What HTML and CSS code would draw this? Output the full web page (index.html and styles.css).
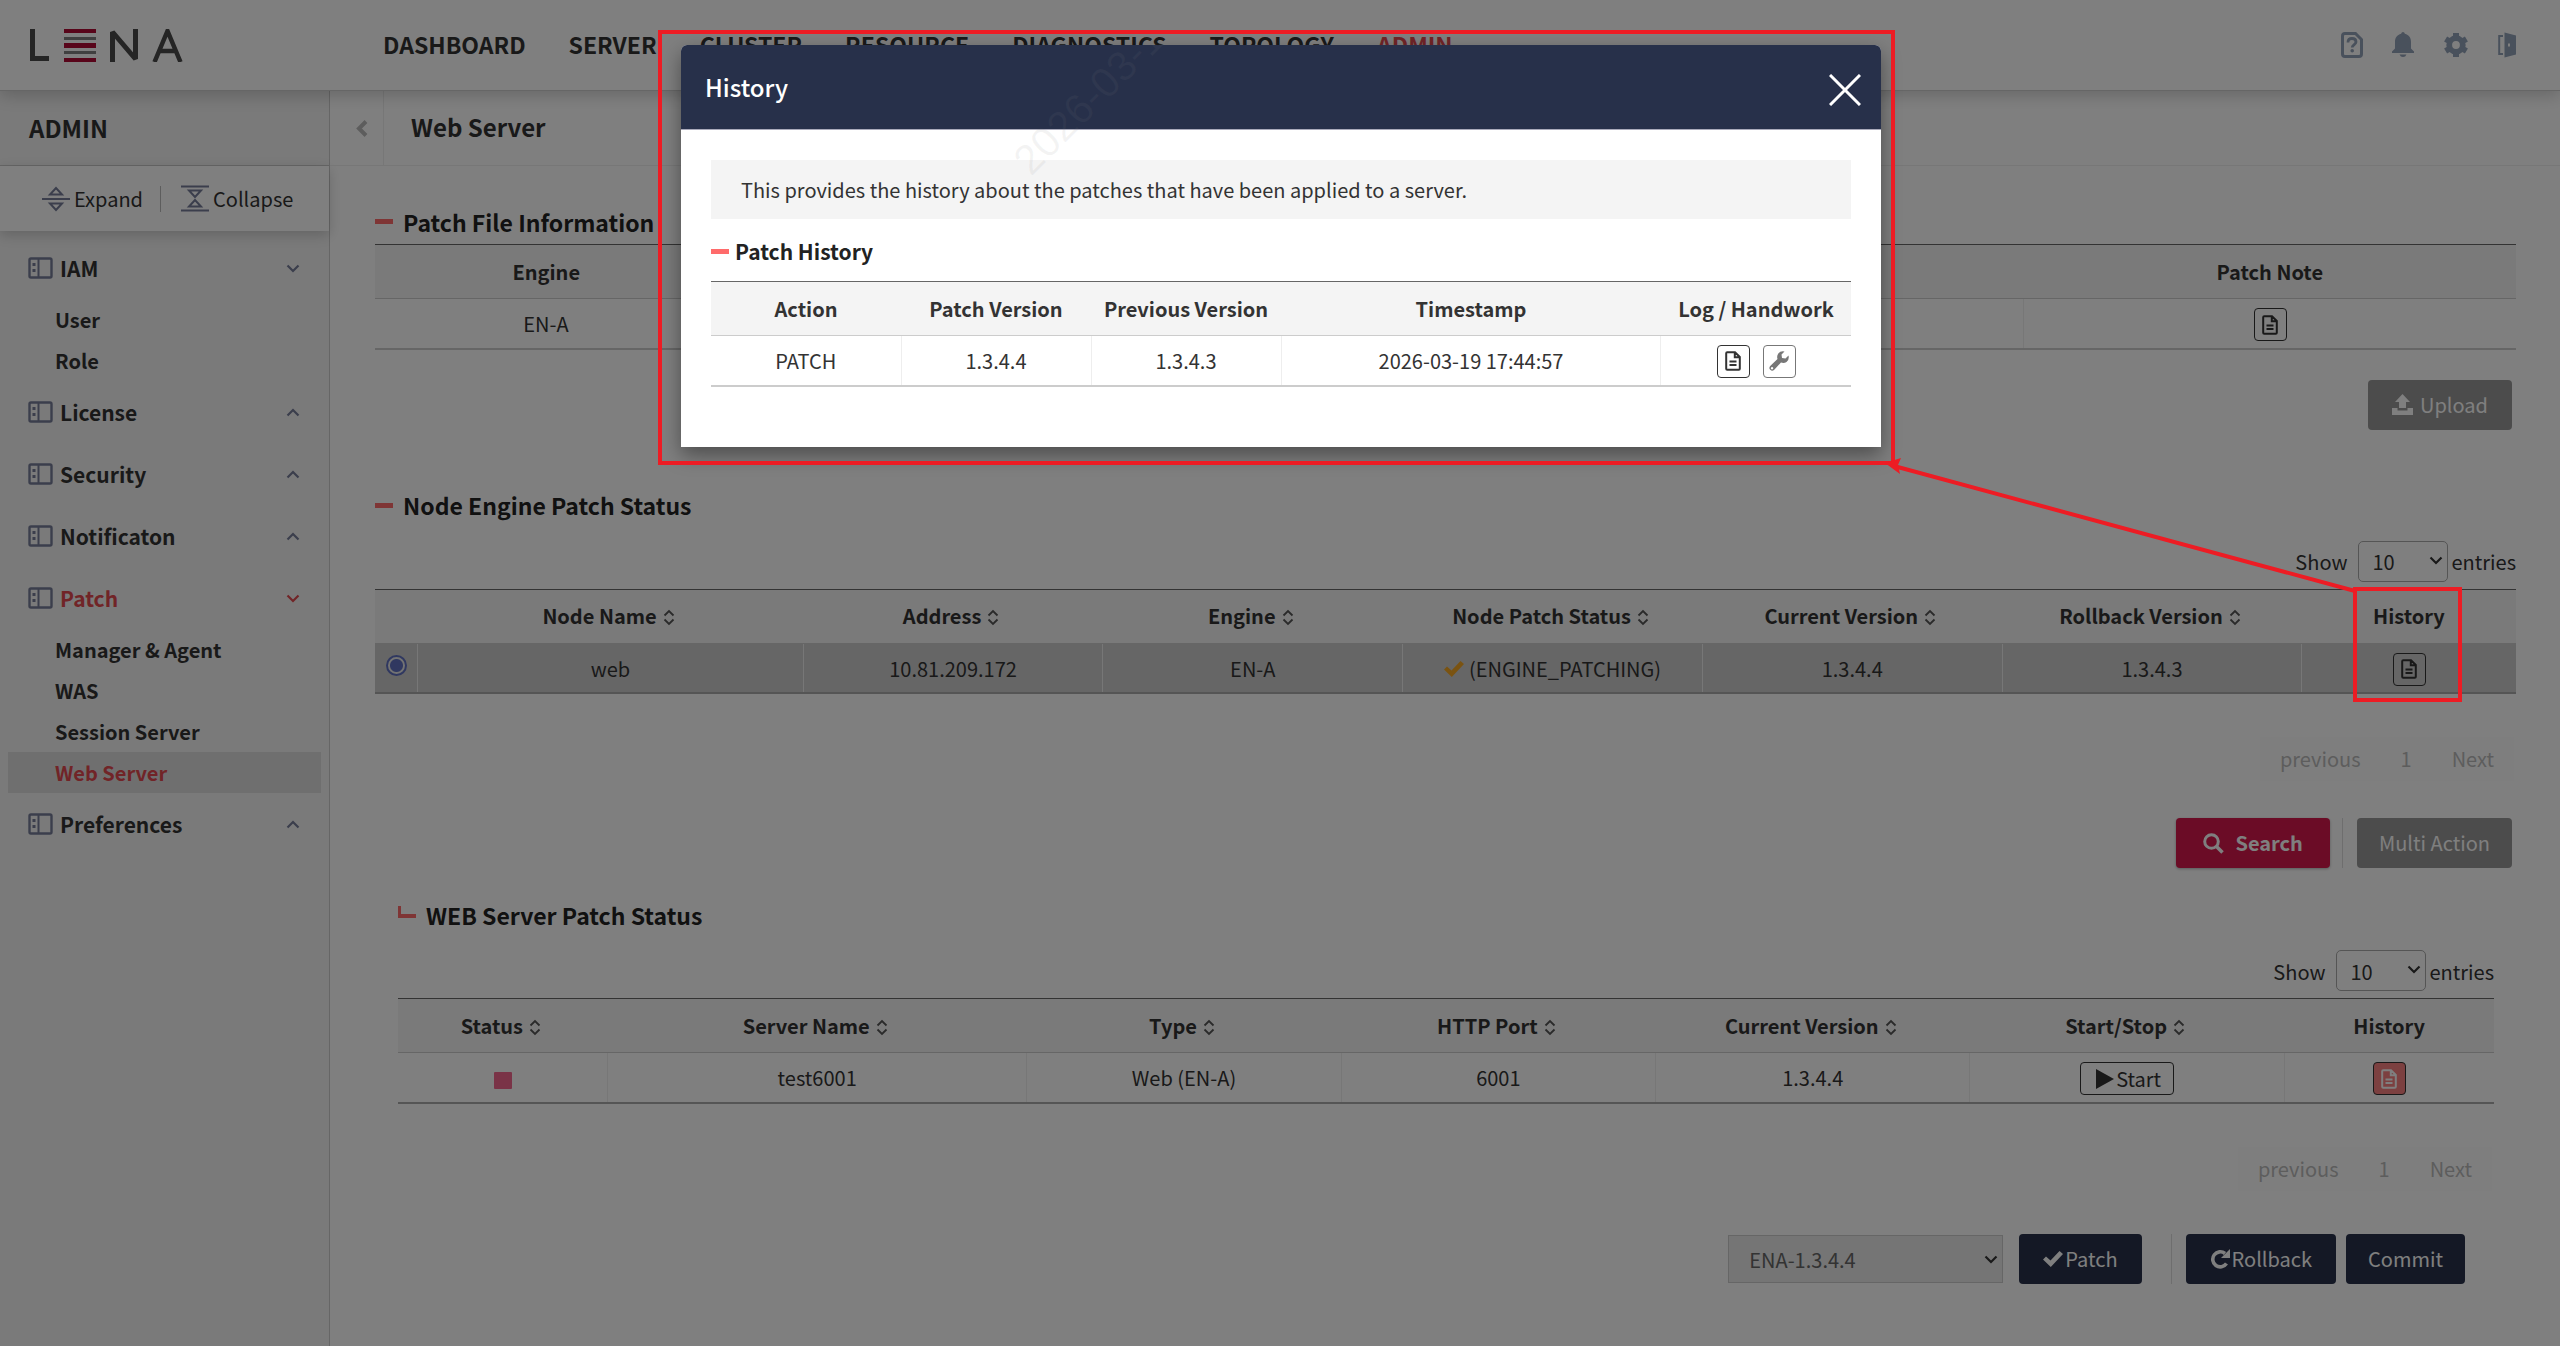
FILE: index.html
```html
<!DOCTYPE html>
<html lang="en">
<head>
<meta charset="utf-8">
<title>LENA - Web Server Patch</title>
<link rel="stylesheet" href="styles.css">
</head>
<body>
<svg class="sprite" aria-hidden="true">
  <symbol id="i-menu" viewBox="0 0 25 22"><rect x="1.500" y="1.500" width="22" height="19" rx="1.500" fill="none" stroke="currentColor" stroke-width="2.400"/><path d="M10.500 1v20" stroke="currentColor" stroke-width="2"/><path d="M4.500 6h3v3h-3zM4.500 12h3v3h-3z" fill="currentColor"/></symbol>
  <symbol id="i-down" viewBox="0 0 14 9"><path d="M1.500 1.500 7 7l5.500-5.500" fill="none" stroke="currentColor" stroke-width="2.200"/></symbol>
  <symbol id="i-up" viewBox="0 0 14 9"><path d="M1.500 7.500 7 2l5.500 5.500" fill="none" stroke="currentColor" stroke-width="2.200"/></symbol>
  <symbol id="i-sort" viewBox="0 0 12 17"><path d="M1.500 6.500 6 2l4.500 4.500M1.500 10.500 6 15l4.500-4.500" fill="none" stroke="currentColor" stroke-width="1.800"/></symbol>
  <symbol id="i-doc" viewBox="0 0 16 20"><path d="M1.200 2.200q0-1 1-1H10l4.800 4.800v11.800q0 1-1 1H2.200q-1 0-1-1zM9.800 1.200v5h5M4.500 10.500h7M4.500 14h7" fill="none" stroke="currentColor" stroke-width="2"/></symbol>
  <symbol id="i-check" viewBox="0 0 20 16"><path d="M0 8.500 3 5.500 7.500 9.500 16.500 0 20 3 7.800 16z" fill="currentColor"/></symbol>
</svg>

<header class="topbar">
  <a class="logo" href="#" aria-label="LENA">
    <svg width="154" height="33" viewBox="0 0 154 33"><g fill="none" stroke="#4a4a4a" stroke-width="5"><path d="M3.500 0v29.500H20"/><path d="M83.500 33V3L106.500 30V0" stroke-linejoin="bevel"/><path d="M125.500 33 138.500 2 151.500 33M129.500 22h18" stroke-width="4.500"/></g><path d="M35 0h32v4H35zM35 14h32v5H35zM35 29h32v4H35z" fill="#b00a34"/><path d="M35 8h32v3H35zM35 22h32v3H35z" fill="#808080"/></svg>
  </a>
  <nav class="mainnav">
    <a href="#">DASHBOARD</a><a href="#">SERVER</a><a href="#">CLUSTER</a><a href="#">RESOURCE</a><a href="#">DIAGNOSTICS</a><a href="#">TOPOLOGY</a><a href="#" class="active">ADMIN</a>
  </nav>
  <div class="tools">
    <button type="button" aria-label="Help"><svg width="22" height="26" viewBox="0 0 22 26"><path d="M4 1.500h10.500l6 6V22q0 2.500-2.500 2.500H4q-2.500 0-2.500-2.500V4Q1.500 1.500 4 1.500z" fill="none" stroke="currentColor" stroke-width="3"/><path d="M7 10.500q0-4 4-4t4 3.500c0 2.500-3.800 2.600-3.800 5.500" fill="none" stroke="currentColor" stroke-width="2.800"/><circle cx="11.200" cy="18.800" r="1.800" fill="currentColor"/></svg></button>
    <button type="button" aria-label="Notifications"><svg width="22" height="26" viewBox="0 0 22 26"><path d="M11 0q1.500 0 1.900 1.800C17 2.800 19 6 19 10v6.500l3 3V21H0v-1.500l3-3V10c0-4 2-7.200 6.100-8.200Q9.500 0 11 0zM7.500 22.500h7Q13.500 25 11 25t-3.500-2.500z" fill="currentColor"/></svg></button>
    <button type="button" aria-label="Settings"><svg width="26" height="26" viewBox="0 0 26 26"><circle cx="13" cy="13" r="6.800" fill="none" stroke="currentColor" stroke-width="5.800"/><path d="M13 1v5M13 20v5M2.600 7l4.300 2.500M19.100 16.500l4.300 2.500M2.600 19l4.300-2.500M19.100 9.500 23.400 7" stroke="currentColor" stroke-width="6"/></svg></button>
    <button type="button" aria-label="Log out"><svg width="18" height="26" viewBox="0 0 18 26"><path d="M5 4H1.200v18H5" fill="none" stroke="currentColor" stroke-width="2"/><path d="M6.500 0.500 18 3.500v19L6.500 25.500zM10 11.500v3h2v-3z" fill="currentColor" fill-rule="evenodd"/></svg></button>
  </div>
</header>

<div class="layout">
  <aside class="sidebar">
    <h2 class="side-title">ADMIN</h2>
    <div class="side-tools">
      <button type="button"><svg width="28" height="26" viewBox="0 0 28 26"><path d="M0 13h28M8 8.500h12L14 2zM8 17.500h12L14 24z" fill="none" stroke="currentColor" stroke-width="2"/></svg>Expand</button>
      <span class="side-sep"></span>
      <button type="button"><svg width="28" height="27" viewBox="0 0 28 27"><path d="M0 1.500h28M0 25.500h28M8 5.500h12L14 12zM8 21.500h12L14 15z" fill="none" stroke="currentColor" stroke-width="2"/></svg>Collapse</button>
    </div>
    <nav class="menu">
      <a class="group" href="#"><svg class="mi"><use href="#i-menu"/></svg>IAM<svg class="chev"><use href="#i-down"/></svg></a>
      <a class="item" href="#">User</a>
      <a class="item" href="#">Role</a>
      <a class="group" href="#"><svg class="mi"><use href="#i-menu"/></svg>License<svg class="chev"><use href="#i-up"/></svg></a>
      <a class="group" href="#"><svg class="mi"><use href="#i-menu"/></svg>Security<svg class="chev"><use href="#i-up"/></svg></a>
      <a class="group" href="#"><svg class="mi"><use href="#i-menu"/></svg>Notificaton<svg class="chev"><use href="#i-up"/></svg></a>
      <a class="group open" href="#"><svg class="mi"><use href="#i-menu"/></svg>Patch<svg class="chev"><use href="#i-down"/></svg></a>
      <a class="item" href="#">Manager &amp; Agent</a>
      <a class="item" href="#">WAS</a>
      <a class="item" href="#">Session Server</a>
      <a class="item current" href="#">Web Server</a>
      <a class="group" href="#"><svg class="mi"><use href="#i-menu"/></svg>Preferences<svg class="chev"><use href="#i-up"/></svg></a>
    </nav>
  </aside>

  <main class="content">
    <div class="crumb">
      <button type="button" class="back" aria-label="Hide menu"><svg width="12" height="17" viewBox="0 0 12 17"><path d="M10 1.500 3 8.500l7 7" fill="none" stroke="currentColor" stroke-width="4"/></svg></button>
      <h1>Web Server</h1>
    </div>

    <section class="block first">
      <h3 class="title">Patch File Information</h3>
      <table class="grid">
        <colgroup><col class="w16"><col><col class="w23"></colgroup>
        <thead><tr><th>Engine</th><th></th><th>Patch Note</th></tr></thead>
        <tbody><tr><td>EN-A</td><td></td><td><button type="button" class="icon-btn" aria-label="Patch note"><svg><use href="#i-doc"/></svg></button></td></tr></tbody>
      </table>
      <div class="actions upload-row">
        <button type="button" class="btn grey"><svg width="21" height="21" viewBox="0 0 21 21"><path d="M10.500 0 18 8h-4v6H7V8H3zM0 14h5.500v2.500h10V14H21v7H0z" fill="currentColor"/></svg>Upload</button>
      </div>
    </section>

    <section class="block nodes">
      <h3 class="title">Node Engine Patch Status</h3>
      <label class="length">Show <span class="select"><select><option>10</option></select><svg><use href="#i-down"/></svg></span> entries</label>
      <table class="grid strong">
        <colgroup><col class="w2"><col class="w18"><col class="w14"><col class="w14"><col class="w14"><col class="w14"><col class="w14"><col class="w10"></colgroup>
        <thead><tr><th></th><th>Node Name<svg class="sort"><use href="#i-sort"/></svg></th><th>Address<svg class="sort"><use href="#i-sort"/></svg></th><th>Engine<svg class="sort"><use href="#i-sort"/></svg></th><th>Node Patch Status<svg class="sort"><use href="#i-sort"/></svg></th><th>Current Version<svg class="sort"><use href="#i-sort"/></svg></th><th>Rollback Version<svg class="sort"><use href="#i-sort"/></svg></th><th>History</th></tr></thead>
        <tbody><tr class="selected"><td><input type="radio" name="node" aria-label="web" checked></td><td>web</td><td>10.81.209.172</td><td>EN-A</td><td><svg class="patching"><use href="#i-check"/></svg>(ENGINE_PATCHING)</td><td>1.3.4.4</td><td>1.3.4.3</td><td><button type="button" class="icon-btn" aria-label="History"><svg><use href="#i-doc"/></svg></button></td></tr></tbody>
      </table>
      <div class="pager"><button type="button">previous</button><button type="button">1</button><button type="button">Next</button></div>
      <div class="actions">
        <button type="button" class="btn red"><svg width="21" height="21" viewBox="0 0 21 21"><circle cx="8.500" cy="8.500" r="6.800" fill="none" stroke="currentColor" stroke-width="3"/><path d="m13.500 13.500 6 6" stroke="currentColor" stroke-width="3.600"/></svg>Search</button>
        <span class="divider"></span>
        <button type="button" class="btn grey plain">Multi Action</button>
      </div>
    </section>

    <section class="block nested">
      <h3 class="title corner">WEB Server Patch Status</h3>
      <label class="length">Show <span class="select"><select><option>10</option></select><svg><use href="#i-down"/></svg></span> entries</label>
      <table class="grid strong">
        <colgroup><col class="w10"><col class="w20"><col class="w15"><col class="w15"><col class="w15"><col class="w15"><col class="w10"></colgroup>
        <thead><tr><th>Status<svg class="sort"><use href="#i-sort"/></svg></th><th>Server Name<svg class="sort"><use href="#i-sort"/></svg></th><th>Type<svg class="sort"><use href="#i-sort"/></svg></th><th>HTTP Port<svg class="sort"><use href="#i-sort"/></svg></th><th>Current Version<svg class="sort"><use href="#i-sort"/></svg></th><th>Start/Stop<svg class="sort"><use href="#i-sort"/></svg></th><th>History</th></tr></thead>
        <tbody><tr><td><span class="stopped"></span></td><td>test6001</td><td>Web (EN-A)</td><td>6001</td><td>1.3.4.4</td><td><button type="button" class="start"><svg width="18" height="20" viewBox="0 0 18 20"><path d="M0 0 18 10 0 20z" fill="currentColor"/></svg>Start</button></td><td><button type="button" class="icon-btn alert" aria-label="History"><svg><use href="#i-doc"/></svg></button></td></tr></tbody>
      </table>
      <div class="pager"><button type="button">previous</button><button type="button">1</button><button type="button">Next</button></div>
      <div class="actions final">
        <span class="select wide"><select aria-label="Patch version" disabled><option>ENA-1.3.4.4</option></select><svg><use href="#i-down"/></svg></span>
        <button type="button" class="btn navy"><svg width="20" height="16"><use href="#i-check"/></svg>Patch</button>
        <span class="divider"></span>
        <button type="button" class="btn navy"><svg width="20" height="20" viewBox="0 0 20 20"><path d="M16.500 14.500A7.500 7.500 0 1 1 15 4.500" fill="none" stroke="currentColor" stroke-width="3.600"/><path d="M20 0v9h-9z" fill="currentColor"/></svg>Rollback</button>
        <button type="button" class="btn navy plain">Commit</button>
      </div>
    </section>
  </main>
</div>

<div class="backdrop">
  <div class="modal" role="dialog" aria-labelledby="modal-title">
    <div class="modal-head">
      <h2 id="modal-title">History</h2>
      <button type="button" aria-label="Close"><svg width="32" height="32" viewBox="0 0 32 32"><path d="m1 1 30 30M31 1 1 31" stroke="currentColor" stroke-width="3"/></svg></button>
    </div>
    <div class="modal-body">
      <p class="info">This provides the history about the patches that have been applied to a server.</p>
      <h3 class="title">Patch History</h3>
      <table class="grid">
        <colgroup><col><col><col><col class="w33"><col></colgroup>
        <thead><tr><th>Action</th><th>Patch Version</th><th>Previous Version</th><th>Timestamp</th><th>Log / Handwork</th></tr></thead>
        <tbody><tr><td>PATCH</td><td>1.3.4.4</td><td>1.3.4.3</td><td>2026-03-19 17:44:57</td><td><span class="pair"><button type="button" class="icon-btn" aria-label="Log"><svg><use href="#i-doc"/></svg></button><button type="button" class="icon-btn muted" aria-label="Handwork"><svg viewBox="0 0 20 20"><path d="M15.500 0.500 12.500 3.500 13 7 16.500 7.500 19.500 4.500Q20.500 9 17.500 11 15 12.500 12 11.500L5 19Q3 20.500 1.300 18.800 -0.500 17 1.200 15L8.500 8Q7.500 5 9.300 2.500 11.500 -0.300 15.500 0.500zM3 16a1.200 1.200 0 1 0 .1 0z" fill="currentColor" fill-rule="evenodd"/></svg></button></span></td></tr></tbody>
      </table>
    </div>
  </div>
</div>

<div class="watermark" aria-hidden="true">2026-03-19</div>
<svg class="callout" width="1806" height="674" viewBox="0 0 1806 674" aria-hidden="true"><g fill="none" stroke="#ed1c24" stroke-width="4"><rect x="2" y="2" width="1233" height="431"/><rect x="1697" y="559" width="105" height="111"/><path d="M1697 561 1236 436"/></g><path d="m1227 433 16-5-3 7 2 9z" fill="#ed1c24"/></svg>
</body>
</html>
```
FILE: styles.css
```css
* { box-sizing: border-box; }
body {
  margin: 0;
  min-height: 100vh;
  display: flex;
  flex-direction: column;
  position: relative;
  background: #fff;
  color: #333;
  font: 400 20px/30px "Noto Sans CJK KR", "Noto Sans", sans-serif;
}
h1, h2, h3 { margin: 0; font-weight: 700; }
p { margin: 0; }
a { color: inherit; text-decoration: none; }
button, select { font: inherit; color: inherit; margin: 0; }
button { border: 0; background: none; padding: 0; }
svg { display: block; flex: none; }
.sprite { position: absolute; width: 0; height: 0; }

/* Top bar */
.topbar {
  display: flex;
  align-items: center;
  height: 91px;
  padding: 0 44px 0 29px;
  border-bottom: 1px solid #ccc;
  background: #fff;
  box-shadow: 0 4px 16px rgba(0, 0, 0, .2);
  z-index: 2;
}
.logo { width: 354px; }
.mainnav { display: flex; gap: 43px; padding-bottom: 2px; font-size: 23px; font-weight: 700; }
.mainnav a { color: #333; }
.mainnav a.active { color: #e2494f; }
.tools { display: flex; align-items: center; gap: 29px; margin-left: auto; color: #93a2b8; }

/* Sidebar */
.layout { display: flex; flex: 1; }
.sidebar { width: 330px; flex: none; background: #f4f4f4; border-right: 1px solid #ccc; }
.side-title {
  height: 75px;
  padding: 0 29px;
  border-bottom: 1px solid #ccc;
  font-size: 24px;
  line-height: 73px;
}
.side-tools {
  display: flex;
  align-items: center;
  height: 65px;
  padding-left: 42px;
  background: #fff;
  box-shadow: 0 4px 12px rgba(0, 0, 0, .18);
}
.side-tools button { display: flex; align-items: center; gap: 4px; }
.side-tools svg { color: #767d99; }
.side-sep { width: 1px; height: 26px; margin: 0 20px 0 17px; background: #bbb; }
.menu { padding-top: 6px; font-weight: 700; }
.menu a { display: flex; align-items: center; color: #333; }
.menu .group { height: 62px; padding: 0 29px 0 28px; gap: 7px; font-size: 21px; }
.menu .item { height: 41px; margin: 0 8px; padding-left: 47px; }
.mi { width: 25px; height: 22px; color: #767d99; }
.chev { width: 14px; height: 9px; margin-left: auto; color: #767d99; }
.menu .open, .menu .open .chev, .menu .current { color: #e2494f; }
.menu .current { background: #dfdfdf; }

/* Content */
.content { flex: 1; min-width: 0; }
.crumb { display: flex; height: 75px; border-bottom: 1px solid #eee; }
.crumb h1 { padding-left: 27px; font-size: 24px; line-height: 72px; }
.back {
  display: flex;
  align-items: center;
  justify-content: flex-end;
  width: 54px;
  padding-right: 15px;
  border-right: 1px solid #eee;
  color: #bbb;
}
.block { padding: 0 44px 0 45px; }
.block.first { padding-top: 40px; }
.block.nodes { padding-top: 60px; }
.block.nested { padding: 31px 66px 0 68px; }
.title {
  display: flex;
  align-items: center;
  gap: 10px;
  height: 38px;
  padding-bottom: 7px;
  color: #222;
  font-size: 23px;
}
.title::before { content: ""; width: 18px; height: 5px; background: #ff6b6b; }
.title.corner::before { width: 15px; height: 8px; margin-bottom: 5px; background: none; border: solid #ff6b6b; border-width: 0 0 4px 3px; }
.length {
  display: flex;
  align-items: baseline;
  justify-content: flex-end;
  gap: 3px;
  margin: 13px 0 7px;
}
.select { position: relative; display: block; margin-left: 8px; }
.select select {
  appearance: none;
  display: block;
  width: 90px;
  height: 41px;
  padding: 2px 13px 0;
  border: 1px solid #aaa;
  border-radius: 5px;
  background: #fff;
}
.select svg { position: absolute; right: 5px; top: 15px; width: 14px; height: 9px; pointer-events: none; }
.select.wide select { width: 275px; height: 48px; padding: 2px 20px 0; border-color: #ccc; border-radius: 0; background: #eaeaea; color: #666; opacity: 1; }
.select.wide svg { top: 20px; }

.grid { width: 100%; table-layout: fixed; border-collapse: collapse; border-top: 1px solid #666; border-bottom: 2px solid #ccc; }
.grid.strong { border-bottom-color: #aaa; }
.grid th { height: 54px; padding: 0; background: #f4f4f4; border-bottom: 1px solid #ccc; font-weight: 700; }
.grid td { height: 50px; padding: 2px 0 0; text-align: center; }
.grid td + td { border-left: 1px solid #eee; }
.grid .selected td { background: #ccc; }
.w2 { width: 2%; } .w10 { width: 10%; } .w14 { width: 14%; } .w15 { width: 15%; } .w16 { width: 16%; }
.w18 { width: 18%; } .w20 { width: 20%; } .w23 { width: 23%; } .w33 { width: 33.333%; }
.sort { display: inline-block; width: 12px; height: 17px; margin: 0 4px 0 6px; vertical-align: -2px; color: #555; }
.patching { display: inline-block; width: 20px; height: 16px; margin-right: 5px; color: #f5a623; }
.stopped { display: inline-block; width: 18px; height: 17px; border-radius: 1px; background: #f4668e; vertical-align: middle; }
input[type="radio"] {
  appearance: none;
  display: block;
  width: 21px;
  height: 21px;
  margin: -7px auto 0;
  border: 2px solid #6070c0;
  border-radius: 50%;
  background: radial-gradient(circle, #6070c0 6px, #e6e6e6 7px);
}
.icon-btn {
  display: inline-flex;
  align-items: center;
  justify-content: center;
  width: 33px;
  height: 33px;
  border: 1px solid #333;
  border-radius: 4px;
  vertical-align: middle;
}
.icon-btn svg { width: 16px; height: 20px; }
.icon-btn.muted { color: #777; border-color: #777; }
.icon-btn.muted svg { width: 20px; }
.icon-btn.alert { background: #f88080; color: #fff; }
.pair { display: flex; justify-content: center; gap: 13px; }
.start {
  display: inline-flex;
  align-items: center;
  gap: 2px;
  height: 33px;
  padding: 0 12px 0 15px;
  border: 1px solid #333;
  border-radius: 4px;
  vertical-align: middle;
}

.pager { display: flex; justify-content: flex-end; padding: 43px 2px 0 0; }
.pager button { height: 44px; padding: 0 20px; color: #bbb; background: #fdfdfd; }
.actions { display: flex; align-items: center; justify-content: flex-end; padding: 37px 4px 0 0; }
.upload-row { padding-top: 30px; }
.btn { display: flex; align-items: center; justify-content: center; gap: 7px; height: 50px; padding: 0 24px; border-radius: 4px; color: #fff; }
.btn.grey { background: #989898; }
.btn.red { background: #d6184c; gap: 11px; padding: 0 27px; font-weight: 700; box-shadow: 0 1px 3px rgba(0, 0, 0, .3); }
.btn.navy { background: #28304a; gap: 2px; }
.btn.plain { padding: 0 22px; }
.divider { width: 1px; height: 50px; margin: 0 14px 0 12px; background: #ddd; }
.final { padding: 43px 29px 0 0; }
.final .wide { margin: 0 16px 0 0; }
.final .divider { margin: 0 14px 0 29px; }
.final .btn + .btn { margin-left: 10px; }

/* Modal */
.backdrop { position: absolute; inset: 0; z-index: 5; padding: 45px 0 0 2px; background: rgba(0, 0, 0, .5); }
.modal { width: 1200px; margin: 0 auto; border-radius: 6px 6px 0 0; overflow: hidden; background: #fff; box-shadow: 0 8px 20px rgba(0, 0, 0, .4); }
.modal-head {
  display: flex;
  align-items: center;
  justify-content: space-between;
  height: 85px;
  padding: 0 20px 0 24px;
  border-bottom: 1px solid #aab;
  background: #27304a;
  color: #fff;
}
.modal-head h2 { font-size: 24px; font-weight: 500; }
.modal-head button { margin-top: 6px; }
.modal-body { padding: 30px 30px 60px; }
.info { padding: 0 30px; background: #f4f4f4; line-height: 59px; }
.modal .title { gap: 6px; margin: 14px 0 10px; padding-bottom: 2px; font-size: 21px; }

.watermark {
  position: absolute;
  z-index: 6;
  left: 1036px;
  top: 140px;
  color: rgba(128, 128, 128, .09);
  font: 42px/42px "Liberation Sans", sans-serif;
  transform-origin: 0 100%;
  transform: rotate(-45deg);
}
.callout { position: absolute; z-index: 7; left: 658px; top: 30px; }
```
